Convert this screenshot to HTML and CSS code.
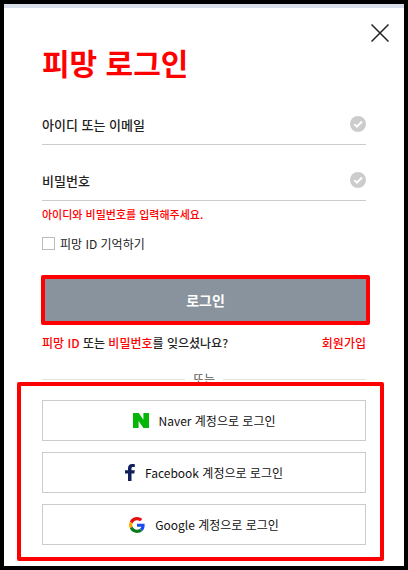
FILE: index.html
```html
<!DOCTYPE html>
<html lang="ko">
<head>
    <meta charset="UTF-8">
    <meta name="viewport" content="width=device-width, initial-scale=1.0">
    <title>피망 로그인</title>
    <link rel="stylesheet" href="styles.css">
</head>
<body>

    <main class="login-page">
        <div class="top-bar">
            <button type="button" class="close-btn" aria-label="닫기">
                <svg width="18" height="18" viewBox="0 0 18 18">
                    <path d="M0.5 0.5L17.5 17.5M17.5 0.5L0.5 17.5" fill="none" stroke="#222" stroke-width="1.5"/>
                </svg>
            </button>
        </div>

        <div class="container">
            <h1>피망 로그인</h1>

            <form>
                <div class="field">
                    <input type="text" name="userid" placeholder="아이디 또는 이메일" aria-label="아이디 또는 이메일">
                    <svg width="16" height="16" viewBox="0 0 16 16">
                        <circle cx="8" cy="8" r="8" fill="#ccc"/>
                        <path d="M4.3 8.2L7 10.7L11.9 5.5" fill="none" stroke="#fff" stroke-width="2"/>
                    </svg>
                </div>
                <div class="field">
                    <input type="password" name="password" placeholder="비밀번호" aria-label="비밀번호">
                    <svg width="16" height="16" viewBox="0 0 16 16">
                        <circle cx="8" cy="8" r="8" fill="#ccc"/>
                        <path d="M4.3 8.2L7 10.7L11.9 5.5" fill="none" stroke="#fff" stroke-width="2"/>
                    </svg>
                </div>
                <p class="error">아이디와 비밀번호를 입력해주세요.</p>

                <label class="remember">
                    <input type="checkbox" name="remember">
                    피망 ID 기억하기
                </label>

                <div class="login-box">
                    <button type="submit" class="login-btn">로그인</button>
                </div>
            </form>

            <div class="links">
                <p><a href="#">피망 ID</a> 또는 <a href="#">비밀번호</a>를 잊으셨나요?</p>
                <a href="#">회원가입</a>
            </div>

            <div class="divider">또는</div>

            <div class="social-box">
                <button type="button" class="social-btn">
                    <svg width="16" height="15" viewBox="0 0 16 15">
                        <path d="M0 0H5.8L10.4 6.8V0H16V15H10.4L5.6 8V15H0Z" fill="#06b606"/>
                    </svg>
                    Naver 계정으로 로그인
                </button>
                <button type="button" class="social-btn">
                    <svg width="10" height="17" viewBox="0 0 10 17">
                        <path d="M3 17V9.5H0V6.3H3V4.2C3 1.5 4.6 0 7.2 0C8.4 0 9.2 0.1 9.8 0.2V3H8.2C6.8 3 6.5 3.6 6.5 4.6V6.3H9.8L9.3 9.5H6.5V17Z" fill="#10205c"/>
                    </svg>
                    Facebook 계정으로 로그인
                </button>
                <button type="button" class="social-btn">
                    <svg width="16" height="16" viewBox="0 0 48 48">
                        <path fill="#e60f0f" d="M24 9.5c3.54 0 6.71 1.22 9.21 3.6l6.85-6.85C35.9 2.38 30.47 0 24 0 14.62 0 6.51 5.38 2.56 13.22l7.98 6.19C12.43 13.72 17.74 9.5 24 9.5z"/>
                        <path fill="#1a4df0" d="M46.98 24.55c0-1.57-.15-3.09-.38-4.55H24v9.02h12.94c-.58 2.96-2.26 5.48-4.78 7.18l7.73 6c4.51-4.18 7.09-10.36 7.09-17.65z"/>
                        <path fill="#ffa800" d="M10.53 28.59c-.48-1.45-.76-2.99-.76-4.59s.27-3.14.76-4.59l-7.98-6.19C.92 16.46 0 20.12 0 24s.92 7.54 2.56 10.78l7.97-6.19z"/>
                        <path fill="#0b7a1e" d="M24 48c6.48 0 11.93-2.13 15.89-5.81l-7.73-6c-2.15 1.45-4.92 2.3-8.16 2.3-6.26 0-11.57-4.22-13.47-9.91l-7.98 6.19C6.51 42.62 14.62 48 24 48z"/>
                    </svg>
                    Google 계정으로 로그인
                </button>
            </div>
        </div>
    </main>

</body>
</html>
```

FILE: styles.css
```css
* {
    box-sizing: border-box;
}
body {
    margin: 0;
    min-height: 100vh;
    display: flex;
    border: 4px solid #000;
    background: #fff;
    color: #222;
}
body, input, button {
    font-family: "Noto Sans CJK KR", sans-serif;
    font-size: 12px;
}
h1, p {
    margin: 0;
}
a {
    color: #ff0000;
    text-decoration: none;
}
button {
    padding: 0;
    cursor: pointer;
}
.login-page {
    flex: 1;
    border-top: 4px solid #d8dfea;
}
.top-bar {
    display: flex;
    justify-content: flex-end;
    padding: 16px 15px 0;
}
.close-btn {
    display: flex;
    border: none;
    background: none;
}
.container {
    padding: 0 38px;
}
h1 {
    font-size: 30px;
    line-height: 40px;
    font-weight: 700;
    color: #ff0000;
}
form {
    padding-top: 22px;
}
.field {
    display: flex;
    align-items: center;
    height: 41px;
    margin-bottom: 15px;
    border-bottom: 1px solid #ccc;
}
.field input {
    flex: 1;
    min-width: 0;
    padding: 0;
    border: none;
    outline: none;
    font-size: 13px;
    font-weight: 500;
    color: #222;
}
.field input::placeholder {
    color: #222;
}
.error {
    margin-top: -12px;
    font-size: 11px;
    line-height: 20px;
    font-weight: 500;
    color: #ff0000;
}
.remember {
    display: flex;
    align-items: center;
    gap: 5px;
    height: 18px;
    margin-top: 10px;
}
.remember input {
    appearance: none;
    width: 13px;
    height: 13px;
    margin: 0;
    border: 1px solid #bbb;
    background: #fff;
}
.remember input:checked {
    background: #89939d;
}
.login-box {
    margin: 23px -4px 0 -1px;
    border: 4px solid #ff0000;
    border-radius: 2px;
}
.login-btn {
    display: block;
    width: 100%;
    height: 42px;
    border: none;
    background: #89939d;
    color: #fff;
    font-size: 14px;
    font-weight: 700;
}
.links {
    display: flex;
    justify-content: space-between;
    margin-top: 8px;
    line-height: 20px;
    font-weight: 500;
}
.divider {
    display: flex;
    align-items: center;
    gap: 8px;
    margin-top: 16px;
    line-height: 20px;
    color: #555;
}
.divider::before,
.divider::after {
    content: "";
    flex: 1;
    border-top: 1px solid #e2e2e2;
}
.social-box {
    position: relative;
    display: flex;
    flex-direction: column;
    gap: 11px;
    margin: -7px -18px 0 -25px;
    padding: 14px 14px 12px 21px;
    border: 4px solid #ff0000;
    border-radius: 2px;
    background: #fff;
}
.social-btn {
    display: flex;
    align-items: center;
    justify-content: center;
    gap: 10px;
    height: 41px;
    border: 1px solid #ccc;
    background: #fff;
    color: #111;
}
```
